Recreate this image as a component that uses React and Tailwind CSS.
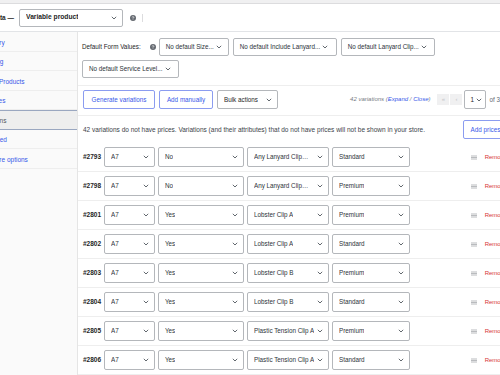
import React from 'react';

const rows = [
  { id: '#2793', inc: 'No', clip: 'Any Lanyard Clip…', level: 'Standard' },
  { id: '#2798', inc: 'No', clip: 'Any Lanyard Clip…', level: 'Premium' },
  { id: '#2801', inc: 'Yes', clip: 'Lobster Clip A', level: 'Premium' },
  { id: '#2802', inc: 'Yes', clip: 'Lobster Clip A', level: 'Standard' },
  { id: '#2803', inc: 'Yes', clip: 'Lobster Clip B', level: 'Premium' },
  { id: '#2804', inc: 'Yes', clip: 'Lobster Clip B', level: 'Standard' },
  { id: '#2805', inc: 'Yes', clip: 'Plastic Tension Clip A', level: 'Premium' },
  { id: '#2806', inc: 'Yes', clip: 'Plastic Tension Clip A', level: 'Standard' },
];

const tabs = [
  { label: 'Inventory' },
  { label: 'Shipping' },
  { label: 'Linked Products' },
  { label: 'Attributes' },
  { label: 'Variations', active: true },
  { label: 'Advanced' },
  { label: 'Get more options' },
];

function Chevron() {
  return (
    <svg width="6" height="4" viewBox="0 0 6 4" className="shrink-0">
      <path d="M0.8 0.8 L3 3 L5.2 0.8" fill="none" stroke="#50575e" strokeWidth="0.9" />
    </svg>
  );
}

function Help() {
  return (
    <svg width="6" height="6" viewBox="0 0 6 6" className="shrink-0">
      <circle cx="3" cy="3" r="3" fill="#646970" />
      <path d="M2.1 2.3 C2.1 1.5 3.9 1.5 3.9 2.3 C3.9 2.9 3 2.9 3 3.6" fill="none" stroke="#fff" strokeWidth="0.7" />
      <circle cx="3" cy="4.6" r="0.4" fill="#fff" />
    </svg>
  );
}

function Handle() {
  return (
    <svg width="6" height="5" viewBox="0 0 6 5" className="shrink-0">
      <path d="M0 1 H6 M0 2.5 H6 M0 4 H6" stroke="#a7aaad" strokeWidth="0.8" />
    </svg>
  );
}

// select box with the chevron pushed to the right edge
function Select({ children, className = '' }) {
  return (
    <div className={`flex items-center justify-between shrink-0 border border-[#b4b7bb] rounded-[2px] bg-white pl-[6px] pr-[5px] ${className}`}>
      <span className="whitespace-nowrap overflow-hidden">{children}</span>
      <Chevron />
    </div>
  );
}

// select box that hugs its text, chevron right after
function InlineSelect({ children, className = '' }) {
  return (
    <div className={`flex items-center gap-[2px] shrink-0 border border-[#b4b7bb] rounded-[2px] bg-white px-[6px] h-[18px] ${className}`}>
      <span className="whitespace-nowrap">{children}</span>
      <Chevron />
    </div>
  );
}

export default function App() {
  return (
    <div className="w-[500px] h-[375px] overflow-hidden bg-white text-[#2c3338] font-['Liberation_Sans',Arial,sans-serif]">
      <div className="h-[4px] bg-[#f0f0f1] border-b border-[#dcdcde]" />

      {/* Product data header */}
      <header className="h-[28px] flex items-center border-b border-[#e2e4e7]">
        <span className="-ml-[34px] text-[6.5px] font-bold text-[#1e1e1e] whitespace-nowrap">Product data —</span>
        <Select className="ml-[5px] w-[104px] h-[18px] text-[6.7px] font-bold text-[#1e1e1e]">Variable product</Select>
        <div className="ml-[7px]"><Help /></div>
        <div className="ml-[6px] w-px h-[8px] bg-[#dcdcde]" />
      </header>

      <div className="flex h-[343px]">
        {/* Tabs */}
        <aside className="w-[78px] shrink-0 bg-[#fafafa] border-r border-[#e5e5e5] overflow-hidden">
          <ul className="-ml-[24px] w-[102px]">
            {tabs.map((t) =>
              t.active ? (
                <li
                  key={t.label}
                  className="h-[19.5px] flex items-center pl-[1px] pt-[2px] bg-[#eeeeee] border border-[#9aa7c0] text-[#50575e] text-[6.5px] whitespace-nowrap"
                >
                  {t.label}
                </li>
              ) : (
                <li
                  key={t.label}
                  className="h-[19.5px] flex items-center pl-[2px] pt-[3px] border-b border-[#eeeeee] text-[#3858e9] text-[6.5px] whitespace-nowrap"
                >
                  {t.label}
                </li>
              )
            )}
          </ul>
        </aside>

        <main className="w-[436px] shrink-0">
          {/* Default form values */}
          <div className="flex flex-wrap items-center gap-[4px] px-[4px] pt-[6px] pb-[7px] border-b border-[#eeeeee] text-[6.3px]">
            <span className="text-[#1e1e1e] whitespace-nowrap">Default Form Values:</span>
            <div className="ml-[5px] mr-[-1px]"><Help /></div>
            <InlineSelect className="w-[70px]">No default Size...</InlineSelect>
            <InlineSelect className="w-[104px]">No default Include Lanyard...</InlineSelect>
            <InlineSelect className="w-[94px]">No default Lanyard Clip...</InlineSelect>
            <InlineSelect className="w-[97px]">No default Service Level...</InlineSelect>
          </div>

          {/* Toolbar */}
          <div className="flex items-center pl-[5px] pt-[4px] pb-[6px] border-b border-[#eeeeee] text-[6.3px]">
            <button className="w-[72px] h-[19px] flex items-center justify-center border border-[#8b9cf0] rounded-[2px] text-[#3858e9] whitespace-nowrap">
              Generate variations
            </button>
            <button className="ml-[4px] w-[54px] h-[19px] flex items-center justify-center border border-[#8b9cf0] rounded-[2px] text-[#3858e9] whitespace-nowrap">
              Add manually
            </button>
            <Select className="ml-[4px] w-[61px] h-[19px] text-[#1e1e1e]">Bulk actions</Select>

            <div className="ml-auto -mr-[15px] flex items-center shrink-0">
              <span className="italic text-[#787c82] text-[6px] whitespace-nowrap">
                42 variations (<span className="text-[#3858e9]">Expand</span> / <span className="text-[#3858e9]">Close</span>)
              </span>
              <span className="ml-[7px] w-[12px] h-[11px] flex items-center justify-center bg-[#f0f0f1] text-[#c3c4c7] text-[6px]">«</span>
              <span className="ml-[1px] w-[12px] h-[11px] flex items-center justify-center bg-[#f0f0f1] text-[#c3c4c7] text-[6px]">‹</span>
              <div className="ml-[2px] w-[22px] h-[19px] flex items-center gap-[2px] pl-[5px] border border-[#b4b7bb] rounded-[2px] text-[#1e1e1e]">
                1 <Chevron />
              </div>
              <span className="ml-[3px] text-[#646970] whitespace-nowrap">of 3</span>
              <span className="ml-[4px] w-[12px] h-[11px] flex items-center justify-center bg-[#f0f0f1] text-[#c3c4c7] text-[6px]">›</span>
              <span className="ml-[1px] w-[12px] h-[11px] flex items-center justify-center bg-[#f0f0f1] text-[#c3c4c7] text-[6px]">»</span>
            </div>
          </div>

          {/* Notice */}
          <div className="h-[27px] flex items-center pl-[5px] pr-[6px]">
            <span className="text-[#3c434a] text-[6.5px] whitespace-nowrap">
              42 variations do not have prices. Variations (and their attributes) that do not have prices will not be shown in your store.
            </span>
            <button className="ml-auto shrink-0 w-[45px] h-[19px] flex items-center justify-center border border-[#8b9cf0] rounded-[2px] text-[#3858e9] text-[6.3px] whitespace-nowrap">
              Add prices
            </button>
          </div>

          {/* Variations */}
          {rows.map((r) => (
            <div key={r.id} className="h-[29px] flex items-center pl-[5px] pr-[7px] border-b border-[#eeeeee] text-[6.3px]">
              <span className="w-[21px] font-bold text-[6.5px] text-[#1e1e1e] whitespace-nowrap">{r.id}</span>
              <Select className="w-[51px] h-[20px]">A7</Select>
              <Select className="ml-[3px] w-[86px] h-[20px]">{r.inc}</Select>
              <Select className="ml-[3px] w-[82px] h-[20px] pl-[5px]">{r.clip}</Select>
              <Select className="ml-[3px] w-[78px] h-[20px]">{r.level}</Select>
              <div className="ml-auto flex items-center gap-[8px]">
                <Handle />
                <span className="text-[#d63638] text-[6px]">Remove</span>
              </div>
            </div>
          ))}
        </main>
      </div>
    </div>
  );
}
